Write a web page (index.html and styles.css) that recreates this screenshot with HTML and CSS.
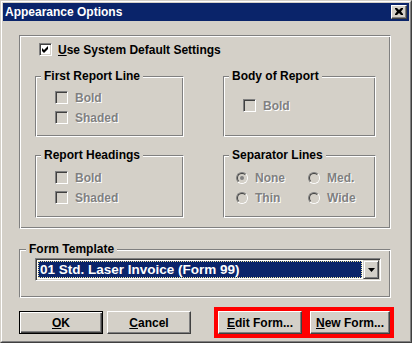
FILE: index.html
```html
<!DOCTYPE html>
<html>
<head>
<meta charset="utf-8">
<link rel="stylesheet" href="styles.css">
</head>
<body>
<div class="window">
  <div class="frame">
    <div class="titlebar">
      <span class="title">Appearance Options</span>
      <span class="close"><svg width="8" height="7" viewBox="0 0 8 7"><path d="M0 0h2l2 2 2-2h2v1L6 3.5 8 6v1H6L4 5 2 7H0V6l2-2.5L0 1z" fill="#000"/></svg></span>
    </div>
    <div class="client">
      <div class="group main">
        <div class="check-row">
          <span class="checkbox on"><svg width="11" height="11" viewBox="0 0 11 11"><polygon points="2,4 4,6 8,2 8,5 4,9 2,7" fill="#000"/></svg></span>
          <span class="lbl"><u>U</u>se System Default Settings</span>
        </div>
        <div class="grid">
          <div class="group sub first">
            <span class="glabel">First Report Line</span>
            <div class="opt"><span class="checkbox"></span><span class="dis">Bold</span></div>
            <div class="opt"><span class="checkbox"></span><span class="dis">Shaded</span></div>
          </div>
          <div class="group sub body-rep">
            <span class="glabel">Body of Report</span>
            <div class="opt"><span class="checkbox"></span><span class="dis">Bold</span></div>
          </div>
          <div class="group sub headings">
            <span class="glabel">Report Headings</span>
            <div class="opt"><span class="checkbox"></span><span class="dis">Bold</span></div>
            <div class="opt"><span class="checkbox"></span><span class="dis">Shaded</span></div>
          </div>
          <div class="group sub sep">
            <span class="glabel">Separator Lines</span>
            <div class="radios">
              <div class="ropt"><span class="radio sel"></span><span class="dis">None</span></div>
              <div class="ropt"><span class="radio"></span><span class="dis">Med.</span></div>
              <div class="ropt"><span class="radio"></span><span class="dis">Thin</span></div>
              <div class="ropt"><span class="radio"></span><span class="dis">Wide</span></div>
            </div>
          </div>
        </div>
      </div>
      <div class="group form">
        <span class="glabel form-label">Form Template</span>
        <div class="combo">
          <div class="combo-field"><span class="combo-sel">01 Std. Laser Invoice (Form 99)</span></div>
          <span class="combo-btn"><svg width="7" height="4" viewBox="0 0 7 4"><polygon points="0,0 7,0 3.5,4" fill="#000"/></svg></span>
        </div>
      </div>
      <div class="buttons">
        <span class="btn default"><span><u>O</u>K</span></span>
        <span class="btn cancel"><span><u>C</u>ancel</span></span>
        <span class="btn edit marked"><span><u>E</u>dit Form...</span></span>
        <span class="btn new marked"><span><u>N</u>ew Form...</span></span>
      </div>
    </div>
  </div>
</div>
</body>
</html>
```
FILE: styles.css
```css
* { box-sizing: border-box; }
html, body { margin: 0; padding: 0; background: #d4d0c8; }
body {
  font-family: "Liberation Sans", Arial, sans-serif;
  font-weight: bold;
  font-size: 12px;
  color: #000;
}
.window {
  width: 412px;
  height: 343px;
  border: 1px solid;
  border-color: #d4d0c8 #404040 #404040 #d4d0c8;
  background: #d4d0c8;
}
.frame {
  height: 100%;
  border: 1px solid;
  border-color: #fff #808080 #808080 #fff;
  padding: 1px;
  display: flex;
  flex-direction: column;
}
.titlebar {
  height: 18px;
  background: #0a246a;
  color: #fff;
  display: flex;
  align-items: center;
  justify-content: space-between;
  padding-left: 2px;
  padding-right: 2px;
  flex: none;
}
.title { line-height: 14px; }
.close {
  width: 16px;
  height: 14px;
  background: #d4d0c8;
  border: 1px solid;
  border-color: #fff #404040 #404040 #fff;
  box-shadow: inset -1px -1px 0 #808080;
  display: flex;
  align-items: center;
  justify-content: center;
}
.close svg { display: block; margin-left: -1px; margin-top: -1px; }
.client {
  padding: 14px 0 0 16px;
}
.group {
  position: relative;
  border: 1px solid;
  border-color: #808080 #fff #fff #808080;
  box-shadow: inset 1px 1px 0 #fff, inset -1px -1px 0 #808080;
}
.glabel {
  position: absolute;
  top: -8px;
  left: 5px;
  padding: 0 3px;
  line-height: 14px;
  background: #d4d0c8;
  white-space: nowrap;
}
.main {
  width: 372px;
  height: 194px;
  padding: 7px 0 0 15px;
}
.check-row {
  display: flex;
  align-items: center;
  height: 13px;
  margin-left: 4px;
  gap: 6px;
}
.lbl { line-height: 14px; white-space: nowrap; }
.checkbox {
  width: 13px;
  height: 13px;
  flex: none;
  border: 1px solid;
  border-color: #808080 #fff #fff #808080;
  box-shadow: inset 1px 1px 0 #404040, inset -1px -1px 0 #d4d0c8;
  background: #d4d0c8;
}
.checkbox.on { background: #fff; }
.checkbox svg { display: block; }
.grid {
  margin-top: 20px;
  display: grid;
  grid-template-columns: 149px 153px;
  grid-template-rows: 61px 63px;
  column-gap: 39px;
  row-gap: 18px;
}
.sub {
  display: flex;
  flex-direction: column;
  gap: 7px;
  padding: 14px 0 0 19px;
}
.body-rep { padding-top: 22px; }
.headings { padding-top: 15px; }
.opt {
  display: flex;
  align-items: center;
  gap: 7px;
  height: 13px;
}
.dis {
  color: #808080;
  text-shadow: 1px 1px 0 #fff;
  line-height: 14px;
  white-space: nowrap;
}
.sep { padding: 16px 0 0 12px; }
.radios {
  display: grid;
  grid-template-columns: 72px 60px;
  grid-auto-rows: 12px;
  row-gap: 8px;
}
.ropt {
  display: flex;
  align-items: center;
  gap: 7px;
}
.radio {
  position: relative;
  width: 12px;
  height: 12px;
  flex: none;
  border-radius: 50%;
  border: 1px solid;
  border-color: #808080 #fff #fff #808080;
}
.radio::before {
  content: "";
  position: absolute;
  inset: 0;
  border-radius: 50%;
  border: 1px solid;
  border-color: #404040 #d4d0c8 #d4d0c8 #404040;
  background: #d4d0c8;
}
.radio.sel::after {
  content: "";
  position: absolute;
  left: 3px;
  top: 3px;
  width: 4px;
  height: 4px;
  border-radius: 50%;
  background: #808080;
}
.form {
  margin-top: 20px;
  width: 372px;
  height: 49px;
  padding: 8px 0 0 15px;
}
.form-label { left: 6px; }
.combo {
  width: 346px;
  height: 23px;
  border: 1px solid;
  border-color: #808080 #fff #fff #808080;
  box-shadow: inset 1px 1px 0 #404040, inset -1px -1px 0 #d4d0c8;
  padding: 1px;
  background: #fff;
  display: flex;
}
.combo-field {
  flex: 1;
  padding: 1px;
  display: flex;
}
.combo-sel {
  flex: 1;
  background: #0a246a;
  color: #fff;
  outline: 1px dotted #f0e6a0;
  outline-offset: -1px;
  padding-left: 2px;
  font-size: 13.5px;
  line-height: 17px;
  white-space: nowrap;
}
.combo-btn {
  width: 16px;
  flex: none;
  background: #d4d0c8;
  border: 1px solid;
  border-color: #d4d0c8 #404040 #404040 #d4d0c8;
  box-shadow: inset 1px 1px 0 #fff, inset -1px -1px 0 #808080;
  display: flex;
  align-items: center;
  justify-content: center;
}
.combo-btn svg { display: block; }
.buttons {
  margin-top: 13px;
  display: flex;
  align-items: flex-start;
}
.btn {
  width: 84px;
  height: 23px;
  flex: none;
  border: 1px solid;
  border-color: #fff #404040 #404040 #fff;
  box-shadow: inset -1px -1px 0 #808080;
  display: flex;
  align-items: center;
  justify-content: center;
  white-space: nowrap;
  line-height: 14px;
}
.btn.default {
  border-color: #000;
  box-shadow: inset 1px 1px 0 #fff, inset -1px -1px 0 #404040, inset -2px -2px 0 #808080;
}
.cancel { margin-left: 4px; }
.edit { margin-left: 27px; }
.new { margin-left: 8px; width: 80px; }
.marked { outline: 4px solid #ff0000; }
```
